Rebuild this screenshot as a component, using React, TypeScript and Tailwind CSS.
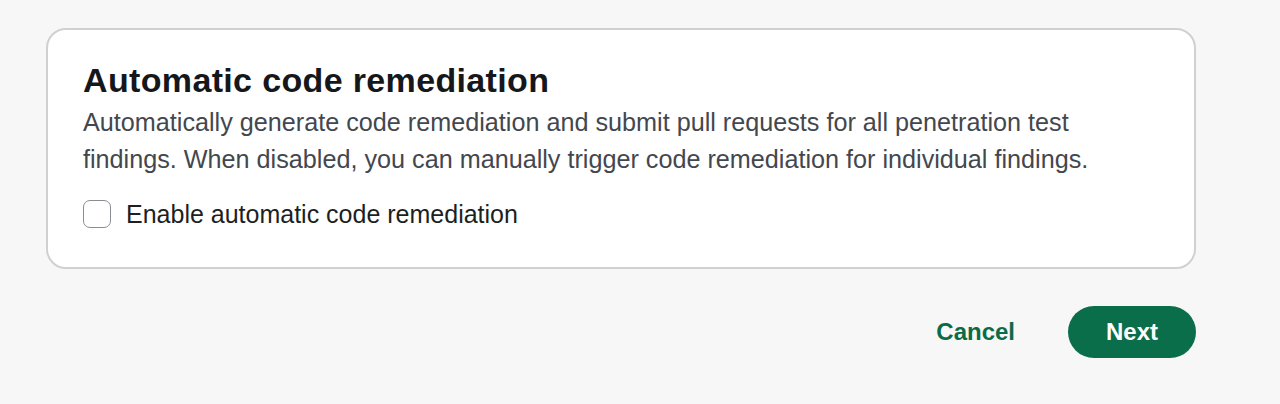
import React, { useState } from 'react';

const App: React.FC = () => {
  const [enabled, setEnabled] = useState(false);

  return (
    <div className="min-h-[404px] w-full bg-[#f7f7f7] pt-[28px] font-['Liberation_Sans',Arial,sans-serif]">
      <div className="ml-[46px] w-[1150px]">
        <div className="rounded-[20px] border-2 border-[#d0d0d0] bg-white px-[35px] pt-[32px] pb-[38px]">
          <h2 className="text-[34px] font-bold leading-[36px] tracking-[0.35px] text-[#15171a]">
            Automatic code remediation
          </h2>
          <p className="mt-[6px] max-w-[1010px] text-[25.2px] leading-[37px] text-[#43474e]">
            Automatically generate code remediation and submit pull requests for all penetration test findings. When
            disabled, you can manually trigger code remediation for individual findings.
          </p>
          <label className="mt-[21px] flex cursor-pointer items-center gap-[15px]">
            <input
              type="checkbox"
              checked={enabled}
              onChange={(e) => setEnabled(e.target.checked)}
              className="sr-only"
            />
            <span className="h-[28px] w-[28px] rounded-[7px] border-[1.5px] border-[#8a8d92] bg-white" />
            <span className="text-[25px] leading-[30px] text-[#1d1f23]">Enable automatic code remediation</span>
          </label>
        </div>
        <div className="mt-[37px] flex items-center justify-end gap-[53px]">
          <button className="text-[24px] font-semibold text-[#0b6b47]">Cancel</button>
          <button className="h-[52px] w-[128px] rounded-full bg-[#0b6e4a] text-[24px] font-semibold text-white">
            Next
          </button>
        </div>
      </div>
    </div>
  );
};

export default App;
